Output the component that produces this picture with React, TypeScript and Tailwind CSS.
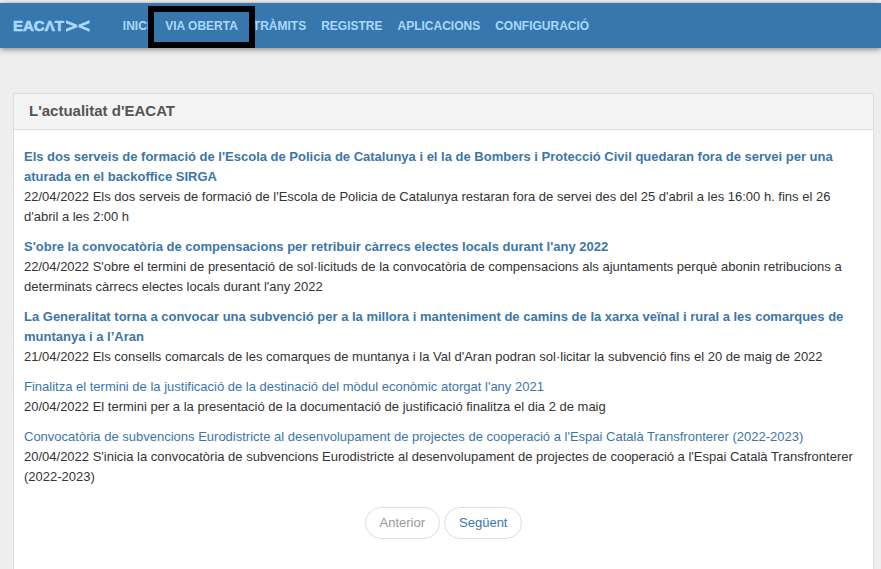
import { clsx } from "clsx";

interface NewsItem {
  title: string;
  date: string;
  summary: string;
  featured: boolean;
}

const NAV_LINKS = [
  { label: "INICI" },
  { label: "VIA OBERTA", marked: true },
  { label: "TRÀMITS" },
  { label: "REGISTRE" },
  { label: "APLICACIONS" },
  { label: "CONFIGURACIÓ" },
];

const NEWS: NewsItem[] = [
  {
    title: "Els dos serveis de formació de l'Escola de Policia de Catalunya i el la de Bombers i Protecció Civil quedaran fora de servei per una aturada en el backoffice SIRGA",
    date: "22/04/2022",
    summary: "Els dos serveis de formació de l'Escola de Policia de Catalunya restaran fora de servei des del 25 d'abril a les 16:00 h. fins el 26 d'abril a les 2:00 h",
    featured: true,
  },
  {
    title: "S'obre la convocatòria de compensacions per retribuir càrrecs electes locals durant l'any 2022",
    date: "22/04/2022",
    summary: "S'obre el termini de presentació de sol·licituds de la convocatòria de compensacions als ajuntaments perquè abonin retribucions a determinats càrrecs electes locals durant l'any 2022",
    featured: true,
  },
  {
    title: "La Generalitat torna a convocar una subvenció per a la millora i manteniment de camins de la xarxa veïnal i rural a les comarques de muntanya i a l’Aran",
    date: "21/04/2022",
    summary: "Els consells comarcals de les comarques de muntanya i la Val d'Aran podran sol·licitar la subvenció fins el 20 de maig de 2022",
    featured: true,
  },
  {
    title: "Finalitza el termini de la justificació de la destinació del mòdul econòmic atorgat l'any 2021",
    date: "20/04/2022",
    summary: "El termini per a la presentació de la documentació de justificació finalitza el dia 2 de maig",
    featured: false,
  },
  {
    title: "Convocatòria de subvencions Eurodistricte al desenvolupament de projectes de cooperació a l'Espai Català Transfronterer (2022-2023)",
    date: "20/04/2022",
    summary: "S'inicia la convocatòria de subvencions Eurodistricte al desenvolupament de projectes de cooperació a l'Espai Català Transfronterer (2022-2023)",
    featured: false,
  },
];

function Logo() {
  return (
    <a href="#" aria-label="EACAT" className="flex items-center gap-px text-[15px] leading-5 font-bold text-[#a9d9ff]">
      <span className="[-webkit-text-stroke:0.6px_#a9d9ff]">EACΛT</span>
      <svg viewBox="0 0 25 12" className="h-3 w-[25px]" fill="currentColor" aria-hidden="true">
        <path d="M1 0.2 L12.2 4.8 V7.2 L1 11.8 V8.8 L8.4 6 L1 3.2 Z" />
        <path d="M24.6 0.2 L13.4 4.8 V7.2 L24.6 11.8 V8.8 L17.2 6 L24.6 3.2 Z" />
      </svg>
    </a>
  );
}

function Navbar() {
  return (
    <header className="relative flex h-[45px] items-center gap-[33px] border-t border-[#4a7399] bg-[#3777ae] pl-[13px] shadow-[0_1px_6px_rgba(0,0,0,0.5)]">
      <Logo />
      <nav className="flex gap-[15px] text-xs font-bold text-[#a9d9ff]">
        {NAV_LINKS.map((link) => (
          <a key={link.label} href="#" className="relative whitespace-nowrap leading-5">
            {link.label}
            {/* Highlight frame, drawn over the neighbouring links */}
            {link.marked && <span className="absolute -inset-x-[17px] -top-[10px] -bottom-3 z-10 border-6 border-black" />}
          </a>
        ))}
      </nav>
    </header>
  );
}

export default function App() {
  return (
    <div className="flex min-h-screen flex-col bg-[#eeeeee] font-['Liberation_Sans',Arial,sans-serif] text-[13px] leading-5 text-[#333333]">
      <div className="h-[3px] bg-[#f3f8fc]" />
      <Navbar />
      <main className="flex flex-1 flex-col pt-[45px] pr-[7px] pl-[13px]">
        <section className="flex-1 border border-b-0 border-[#dddddd] bg-white">
          <h1 className="border-b border-[#dddddd] bg-[#f4f4f4] px-[15px] pt-[7px] pb-2 text-[15px] leading-5 font-bold text-[#555555]">
            L'actualitat d'EACAT
          </h1>
          <div className="px-[10px] pt-[17px]">
            <ul className="space-y-[10px]">
              {NEWS.map((item) => (
                <li key={item.title}>
                  <a href="#" className={clsx("block text-[#3b76ab]", item.featured && "font-bold")}>
                    {item.title}
                  </a>
                  <p>{`${item.date} ${item.summary}`}</p>
                </li>
              ))}
            </ul>
            <div className="mt-5 flex justify-center gap-1 pb-5">
              <button type="button" disabled className="rounded-full border border-[#dddddd] px-[14px] py-[5px] text-[#999999]">
                Anterior
              </button>
              <button type="button" className="rounded-full border border-[#dddddd] px-[14px] py-[5px] text-[#3b76ab]">
                Següent
              </button>
            </div>
          </div>
        </section>
      </main>
    </div>
  );
}
